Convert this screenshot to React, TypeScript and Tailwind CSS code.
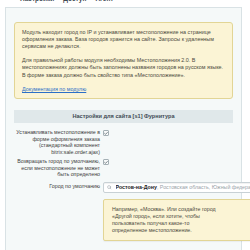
import { Search, CircleX, Check } from "lucide-react";

const FONT = { fontFamily: '"Liberation Sans", Arial, sans-serif' };

function Checkbox() {
  return (
    <span className="flex h-[6px] w-[6px] items-center justify-center rounded-[1px] border border-[#a4b0b5] bg-[#f8fafa]">
      <Check className="h-[5px] w-[5px] text-[#3b4a52]" strokeWidth={4} />
    </span>
  );
}

export default function App() {
  return (
    <div
      className="h-[250px] w-[250px] overflow-hidden bg-white text-[#333]"
      style={FONT}
    >
      <div className="h-[7px] overflow-hidden">
        <div className="-mt-[6px] flex gap-[9px] pl-[20px] text-[6.5px] font-bold text-[#3f4b54]">
          <span>Настройки</span>
          <span>Доступ</span>
          <span>Агент</span>
        </div>
      </div>

      <div className="ml-[5px] w-[237px] border border-[#d9e2e5] bg-[#f5f9f9] px-[8px] pt-[14px] pb-[10px]">
        <div className="rounded-[3px] border border-[#e2d595] bg-[#fbf4d5] px-[7px] pt-[6px] pb-[5px] text-[5.4px] leading-[7.1px] text-[#4b4a40]">
          <p>
            Модуль находит город по IP и устанавливает местоположение на странице
            оформления заказа. База городов хранится на сайте. Запросы к удаленным
            сервисам не делаются.
          </p>
          <p className="mt-[7.1px]">
            Для правильной работы модуля необходимы Местоположения 2.0. В
            местоположениях должны быть заполнены названия городов на русском языке.
            В форме заказа должно быть свойство типа «Местоположение».
          </p>
          <p className="mt-[7.1px]">
            <a className="text-[#2b6fc7] underline">Документация по модулю</a>
          </p>
        </div>

        <div className="mt-[11px] flex h-[13px] items-center justify-center bg-[#e0e8ea] text-[5.6px] font-bold text-[#3f4b54]">
          Настройки для сайта [s1] Фурнитура
        </div>

        <div className="mt-[6.5px] grid grid-cols-[86px_1fr] gap-x-[3px] text-[5.3px] leading-[6.4px] text-[#3d3d3d]">
          <div className="text-right">
            Устанавливать местоположение в
            <br />
            форме оформления заказа
            <br />
            (стандартный компонент
            <br />
            bitrix:sale.order.ajax)
          </div>
          <div className="pt-[1px]">
            <Checkbox />
          </div>

          <div className="mt-[3.4px] text-right">
            Возвращать город по умолчанию,
            <br />
            если местоположение не может
            <br />
            быть определено
          </div>
          <div className="mt-[3.4px] pt-[1px]">
            <Checkbox />
          </div>

          <div className="mt-[4px] pt-[1px] text-right">Город по умолчанию</div>
          <div className="mt-[4px] flex flex-col gap-[6px]">
            <div className="flex h-[11.5px] items-center gap-[3px] rounded-[2px] border border-[#c8d1d5] bg-white pr-[3px] pl-[3px] shadow-[inset_0_1px_1px_rgba(0,0,0,0.06)]">
              <Search className="h-[4.5px] w-[4.5px] shrink-0 text-[#8a949a]" strokeWidth={2.5} />
              <div className="ml-[1px] flex-1 overflow-hidden whitespace-nowrap text-[5.3px]">
                <span className="font-bold text-[#222]">Ростов-на-Дону</span>
                <span className="text-[#9aa3a8]">, Ростовская область, Южный федеральный округ</span>
              </div>
              <CircleX className="h-[5px] w-[5px] shrink-0 fill-[#555] text-white" strokeWidth={3} />
            </div>
            <div className="rounded-[2px] border border-[#e2d595] bg-[#fbf4d5] px-[8px] pt-[5.7px] pb-[5.4px] text-[5.3px] leading-[7.2px] text-[#4b4a40] shadow-[0_1px_1px_rgba(0,0,0,0.05)]">
              Например, «Москва». Или создайте город
              <br />
              «Другой город», если хотите, чтобы
              <br />
              пользователь получал какое-то
              <br />
              определенное местоположение.
            </div>
          </div>
        </div>
      </div>
    </div>
  );
}
